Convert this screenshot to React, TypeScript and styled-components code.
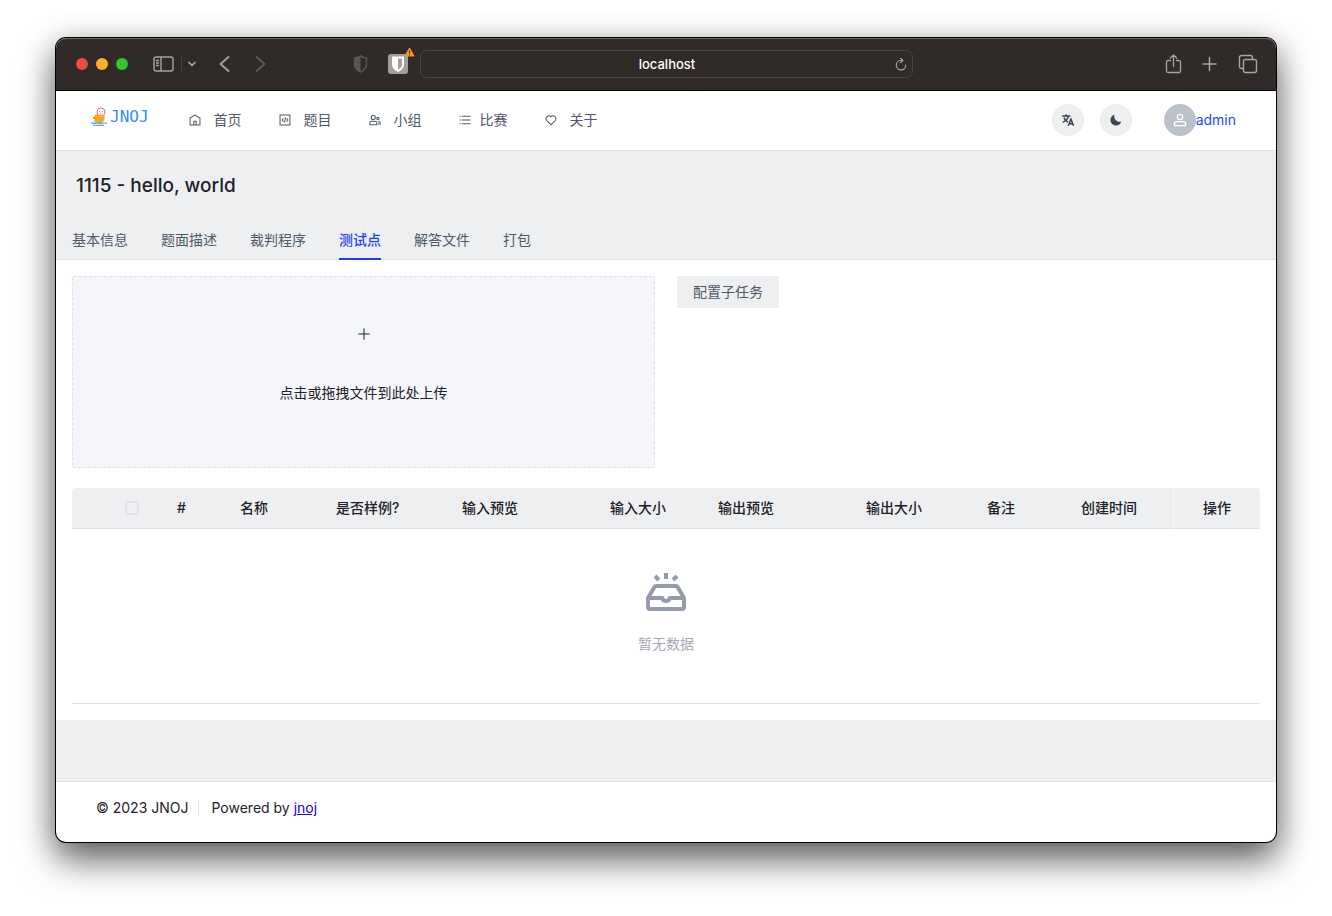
import React from "react";
import styled, { createGlobalStyle, css } from "styled-components";

const GlobalStyle = createGlobalStyle`
  *, *::before, *::after { box-sizing: border-box; }
  body {
    margin: 0;
    background: #fff;
    color: #1d2129;
    font-family: Inter, "Noto Sans CJK SC", sans-serif;
    font-size: 14px;
    line-height: 22px;
  }
  button { font: inherit; color: inherit; border: 0; background: none; padding: 0; cursor: pointer; }
  svg { display: block; flex: none; }
`;

const Desktop = styled.div`
  padding: 38px 56px 74px;
  overflow: hidden;
`;

const BrowserWindow = styled.div`
  border-radius: 10px;
  background: #fff;
  box-shadow: 0 0 0 1px #000, 0 18px 36px rgba(0, 0, 0, 0.55), 0 6px 32px rgba(0, 0, 0, 0.25);
`;

const TitleBar = styled.div`
  display: grid;
  grid-template-columns: 1fr minmax(0, 493px) 1fr;
  align-items: center;
  height: 53px;
  background: #302a28;
  border-bottom: 1px solid #000;
  border-radius: 10px 10px 0 0;
  box-shadow: inset 0 1px 0 #6b6766;
  color: #a8a4a2;
`;

const BarSide = styled.div<{ $end?: boolean }>`
  display: flex;
  align-items: center;
  padding: ${(p) => (p.$end ? "0 18px 0 0" : "0 12px 0 20px")};
  ${(p) => p.$end && css`justify-content: flex-end; gap: 20px;`}
`;

const Lights = styled.div`
  display: flex;
  gap: 8px;
  margin-right: 25px;
`;

const Light = styled.span<{ $color: string }>`
  width: 12px;
  height: 12px;
  border-radius: 50%;
  background: ${(p) => p.$color};
`;

const BarButton = styled.button<{ $dim?: boolean }>`
  display: block;
  color: ${(p) => (p.$dim ? "#5c5755" : "inherit")};
`;

const BarRule = styled.span`
  width: 1px;
  height: 18px;
  margin: 0 4px 0 7px;
  background: #45403e;
`;

const History = styled.div`
  display: flex;
  gap: 16px;
  margin-left: 16px;
`;

const Extensions = styled.div`
  display: flex;
  align-items: center;
  gap: 20px;
  margin-left: auto;
`;

const Extension = styled.button`
  position: relative;
  width: 20px;
  height: 20px;
  border-radius: 3px;
  background: #a19e9d;
`;

const Warning = styled.span`
  position: absolute;
  top: -7px;
  right: -7px;
`;

const AddressBar = styled.div`
  display: flex;
  align-items: center;
  height: 28px;
  padding: 0 4px 0 20px;
  border: 1px solid #4b4644;
  border-radius: 7px;
`;

const Address = styled.input`
  flex: 1;
  min-width: 0;
  padding: 0;
  border: 0;
  outline: 0;
  background: none;
  color: #fff;
  text-align: center;
  font: 500 13px/20px Inter, sans-serif;
`;

const SiteHeader = styled.header`
  display: flex;
  align-items: center;
  height: 60px;
  padding: 0 40px 2px 34px;
  border-bottom: 1px solid #dfe1e7;
`;

const Logo = styled.a`
  display: flex;
  align-items: center;
  gap: 2px;
  margin: 0 39px 6px 0;
  color: #2f8ff5;
  text-decoration: none;
  font: 16px/20px "DejaVu Sans Mono", monospace;
`;

const Nav = styled.nav`
  display: flex;
  gap: 36px;
`;

const NavLink = styled.a<{ $tight?: boolean }>`
  display: flex;
  align-items: center;
  gap: ${(p) => (p.$tight ? 8 : 12)}px;
  color: #4e5969;
  text-decoration: none;
`;

const Tools = styled.div`
  display: flex;
  align-items: center;
  gap: 16px;
  margin-left: auto;
`;

const RoundButton = styled.button`
  display: grid;
  place-items: center;
  width: 32px;
  height: 32px;
  border-radius: 50%;
  background: #eeeff1;
  color: #3c4656;
`;

const Account = styled.a`
  display: flex;
  align-items: center;
  margin-left: 16px;
  color: #1f47ff;
  text-decoration: none;
`;

const Avatar = styled.span`
  display: grid;
  place-items: center;
  width: 32px;
  height: 32px;
  border-radius: 50%;
  background: #bcc0cb;
  color: #fff;
`;

const ProblemHeader = styled.div`
  padding: 20px 16px 0;
  background: #eeeff1;
  border-bottom: 1px solid #dfe1e7;
`;

const Title = styled.h1`
  margin: 0 0 28px 4px;
  font-size: 19px;
  line-height: 30px;
  font-weight: 500;
`;

const Tabs = styled.div`
  display: flex;
  gap: 33px;
  margin-bottom: -1px;
`;

const Tab = styled.button<{ $active?: boolean }>`
  height: 31px;
  padding-bottom: 7px;
  border-bottom: 2px solid ${(p) => (p.$active ? "#1f3fff" : "transparent")};
  color: ${(p) => (p.$active ? "#1f3fff" : "#4e5969")};
  font-weight: ${(p) => (p.$active ? 500 : 400)};
`;

const Content = styled.main`
  padding: 16px;
`;

const Split = styled.div`
  display: grid;
  grid-template-columns: 1fr 1fr;
  gap: 22px;
  align-items: start;
  margin-bottom: 20px;
`;

const DropZone = styled.button`
  display: flex;
  flex-direction: column;
  align-items: center;
  gap: 40px;
  padding: 49px 0 63px;
  border: 1px dashed #dfe1e7;
  border-radius: 2px;
  background: #f4f6fb;
  color: #1d2129;
`;

const GrayButton = styled.button`
  justify-self: start;
  height: 32px;
  padding: 0 16px;
  background: #eeeff1;
  color: #4e5969;
`;

const DataTable = styled.table`
  width: 100%;
  table-layout: fixed;
  border-collapse: separate;
  border-spacing: 0;
`;

const HeadCell = styled.th<{ $center?: boolean; $divided?: boolean }>`
  height: 41px;
  padding: 0 ${(p) => (p.$center ? 0 : 16)}px;
  background: #eeeff1;
  border-bottom: 1px solid #dfe1e7;
  border-left: ${(p) => (p.$divided ? "1px solid #f8f8fa" : "0")};
  font-weight: 500;
  text-align: ${(p) => (p.$center ? "center" : "left")};
  white-space: nowrap;
  &:first-child { border-top-left-radius: 4px; }
  &:last-child { border-top-right-radius: 4px; }
`;

const Checkbox = styled.input`
  appearance: none;
  display: block;
  width: 14px;
  height: 14px;
  margin: 0 auto;
  border: 2px solid #dfe1e7;
  border-radius: 2px;
`;

const EmptyCell = styled.td`
  padding: 39px 0 48px;
  border-bottom: 1px solid #dfe1e7;
  color: #a3a9b4;
`;

const Empty = styled.div`
  display: flex;
  flex-direction: column;
  align-items: center;
  gap: 17px;
`;

const EmptyText = styled.span`
  line-height: 22px;
`;

const Band = styled.div`
  height: 61px;
  background: #eeeff1;
`;

const Footer = styled.footer`
  display: flex;
  align-items: center;
  padding: 15px 40px 23px;
  border-top: 1px solid #dfe1e7;
  line-height: 22px;
`;

const FooterRule = styled.span`
  width: 1px;
  height: 14px;
  margin: 0 12px 0 10px;
  background: #dfe1e7;
`;

const FooterLink = styled.a`
  color: #1a00e6;
  text-decoration: underline;
`;

type IconProps = { size: number; color?: string; children: React.ReactNode; weight?: number };

const Icon = ({ size, color = "currentColor", weight = 4, children }: IconProps) => (
  <svg width={size} height={size} viewBox="0 0 48 48" fill="none" stroke={color} strokeWidth={weight} aria-hidden="true">
    {children}
  </svg>
);

const navItems = [
  { label: "首页", art: <path d="M7 17 24 7l17 10v24H7V17ZM20 28h8v13h-8V28Z" /> },
  {
    label: "题目",
    art: <path d="M7 7h34v34H7V7ZM19 18l-5 6 5 6M29 18l5 6-5 6M26 16l-4 16" />,
  },
  {
    label: "小组",
    art: (
      <>
        <circle cx="18" cy="15" r="7" />
        <circle cx="34" cy="19" r="4" />
        <path d="M6 34a6 6 0 0 1 6-6h12a6 6 0 0 1 6 6v6H6v-6ZM34 30h4a4 4 0 0 1 4 4v4h-8" />
      </>
    ),
  },
  { label: "比赛", tight: true, art: <path d="M13 24h30M5 11h4m4 26h30M13 11h30M5 24h4M5 37h4" /> },
  {
    label: "关于",
    art: (
      <path d="M38.083 12.912a9.659 9.659 0 0 1 0 13.66L24 40.2 9.917 26.572a9.659 9.659 0 0 1 13.659-13.66l.424.425.425-.425a9.659 9.659 0 0 1 13.658 0Z" />
    ),
  },
];

const tabs = ["基本信息", "题面描述", "裁判程序", "测试点", "解答文件", "打包"];

const columns = [
  { label: "#", width: 63 },
  { label: "名称", width: 96 },
  { label: "是否样例?", width: 126 },
  { label: "输入预览", width: 148 },
  { label: "输入大小", width: 108 },
  { label: "输出预览", width: 148 },
  { label: "输出大小", width: 121 },
  { label: "备注", width: 94 },
  { label: "创建时间", width: 108 },
];

const Duck = () => (
  <svg width="18" height="20" viewBox="0 0 18 20" aria-hidden="true">
    <circle cx="11" cy="5" r="4" fill="#fff" stroke="#d8737a" />
    <path d="M9.500 4v1.400M12.300 4v1.400M9.500 6.800h3" stroke="#d8737a" strokeWidth=".8" />
    <path d="M6 7.500c2-.800 4 .200 4.500 2 1.500 0 3-.300 4-1 .800 3-.500 6.500-3.500 7.500H6.500c-2.500-.800-3-3.200-1.300-4.500C3.500 10.500 4 8.300 6 7.500Z" fill="#f9a81c" />
    <path d="M2.500 11 5 9.800v2.400Z" fill="#e8602c" />
    <path d="M1 16.200c2-1 3 1 5.500 0s3.500 1 5.500 0 3 .500 5-.200M3 18.300c2-.700 3 .500 5 0s3 .400 6-.200" fill="none" stroke="#4aa8f0" strokeWidth="1.200" />
  </svg>
);

const Shield = ({ width, height }: { width: number; height: number }) => (
  <svg width={width} height={height} viewBox="0 0 14 18" aria-hidden="true">
    <path
      d="M7 1c2 1.300 4 1.900 6 2v6c0 4-2.500 6.500-6 8-3.500-1.500-6-4-6-8V3c2-.100 4-.700 6-2Z"
      fill="none"
      stroke="#5b5654"
      strokeWidth="1.500"
    />
    <path d="M7 1v16c-3.500-1.500-6-4-6-8V3c2-.100 4-.700 6-2Z" fill="#5b5654" />
  </svg>
);

const Line = ({ w, h, d, weight = 1.4 }: { w: number; h: number; d: string; weight?: number }) => (
  <svg
    width={w}
    height={h}
    viewBox={`0 0 ${w} ${h}`}
    fill="none"
    stroke="currentColor"
    strokeWidth={weight}
    strokeLinecap="round"
    strokeLinejoin="round"
    aria-hidden="true"
  >
    <path d={d} />
  </svg>
);

export default function App() {
  return (
    <Desktop>
      <GlobalStyle />
      <BrowserWindow>
        <TitleBar>
          <BarSide>
            <Lights>
              <Light $color="#f04a47" />
              <Light $color="#f7b02a" />
              <Light $color="#37c332" />
            </Lights>
            <BarButton aria-label="Sidebar">
              <Line w={21} h={16} d="M3 1h15a2 2 0 0 1 2 2v10a2 2 0 0 1-2 2H3a2 2 0 0 1-2-2V3a2 2 0 0 1 2-2ZM8 1v14M3.500 4.500h2M3.500 7h2M3.500 9.500h2" weight={1.4} />
            </BarButton>
            <BarRule />
            <BarButton aria-label="Tab groups">
              <Line w={12} h={8} d="M3 2.500 6 5.500 9 2.500" weight={1.7} />
            </BarButton>
            <History>
              <BarButton aria-label="Back">
                <Line w={20} h={18} d="M14.500 2 6.500 9l8 7" weight={1.8} />
              </BarButton>
              <BarButton aria-label="Forward" $dim>
                <Line w={20} h={18} d="M6.500 2l8 7-8 7" weight={1.8} />
              </BarButton>
            </History>
            <Extensions>
              <Shield width={15} height={18} />
              <Extension aria-label="Password manager">
                <svg width="20" height="20" viewBox="0 0 20 20" aria-hidden="true">
                  <path d="M4 2.500h12v8c0 3.500-2.500 5.500-6 7.500-3.500-2-6-4-6-7.500v-8Z" fill="#fff" />
                  <path d="M10 4.500h4v6c0 2.300-1.500 3.800-4 5.200V4.500Z" fill="#a19e9d" />
                </svg>
                <Warning>
                  <svg width="11" height="10" viewBox="0 0 11 10" aria-hidden="true">
                    <path d="M5.500 1 10 9H1L5.500 1Z" fill="#f39a1d" stroke="#f39a1d" strokeLinejoin="round" />
                    <path d="M5.500 3.500v3M5.500 7.500v1" stroke="#4a3210" strokeWidth="1.100" />
                  </svg>
                </Warning>
              </Extension>
            </Extensions>
          </BarSide>
          <AddressBar>
            <Address aria-label="Address" defaultValue="localhost" />
            <BarButton aria-label="Reload">
              <Line w={14} h={14} d="M11.700 8.200a4.700 4.700 0 1 1-4.700-4.700h1.700M6.700 1.300l2.200 2.200-2.200 2.200" weight={1.2} />
            </BarButton>
          </AddressBar>
          <BarSide $end>
            <BarButton aria-label="Share">
              <Line w={17} h={20} d="M5.500 6.500H3A1.500 1.500 0 0 0 1.500 8v9A1.500 1.500 0 0 0 3 18.500h11a1.500 1.500 0 0 0 1.500-1.500V8A1.500 1.500 0 0 0 14 6.500h-2.500M8.500 12.500V1M5.300 4l3.200-3 3.200 3" weight={1.3} />
            </BarButton>
            <BarButton aria-label="New tab">
              <Line w={16} h={16} d="M7.500 1.500v13M1 8h13" weight={1.5} />
            </BarButton>
            <BarButton aria-label="Tab overview">
              <Line w={20} h={20} d="M7.500 5.500h9a2 2 0 0 1 2 2v9a2 2 0 0 1-2 2h-9a2 2 0 0 1-2-2v-9a2 2 0 0 1 2-2ZM5.500 14.500H3.500a2 2 0 0 1-2-2v-9a2 2 0 0 1 2-2h9a2 2 0 0 1 2 2v2" weight={1.4} />
            </BarButton>
          </BarSide>
        </TitleBar>

        <SiteHeader>
          <Logo href="#">
            <Duck />
            JNOJ
          </Logo>
          <Nav>
            {navItems.map((item) => (
              <NavLink key={item.label} href="#" $tight={item.tight}>
                <Icon size={14} weight={3.5}>
                  {item.art}
                </Icon>
                {item.label}
              </NavLink>
            ))}
          </Nav>
          <Tools>
            <RoundButton aria-label="Language">
              <svg width="14" height="14" viewBox="0 0 24 24" fill="none" stroke="currentColor" strokeWidth="2.600" aria-hidden="true">
                <path d="M2 5h14M9 2v3M13 5c-1 4.500-4.500 8.500-10 11M5 8c1.500 3.500 4 6 7 7.500M12.500 22l4.500-11.500L21.500 22M14 18.500h6.500" />
              </svg>
            </RoundButton>
            <RoundButton aria-label="Dark mode">
              <svg width="14" height="14" viewBox="0 0 48 48" fill="currentColor" aria-hidden="true">
                <path d="M42.108 29.769c.124-.387-.258-.736-.645-.613A17.990 17.990 0 0 1 36 30c-9.941 0-18-8.059-18-18 0-1.904.296-3.740.844-5.463.123-.387-.226-.768-.613-.645C10.558 8.334 5 15.518 5 24c0 10.493 8.507 19 19 19 8.482 0 15.666-5.558 18.108-13.231Z" />
              </svg>
            </RoundButton>
            <Account href="#">
              <Avatar>
                <Icon size={16}>
                  <circle cx="24" cy="15" r="8" />
                  <path d="M7 37c0-4.970 4.030-8 9-8h16c4.970 0 9 3.030 9 8v3a1 1 0 0 1-1 1H8a1 1 0 0 1-1-1v-3Z" />
                </Icon>
              </Avatar>
              admin
            </Account>
          </Tools>
        </SiteHeader>

        <ProblemHeader>
          <Title>1115 - hello, world</Title>
          <Tabs role="tablist">
            {tabs.map((name) => (
              <Tab key={name} role="tab" aria-selected={name === "测试点"} $active={name === "测试点"}>
                {name}
              </Tab>
            ))}
          </Tabs>
        </ProblemHeader>

        <Content>
          <Split>
            <DropZone>
              <Icon size={16} weight={3}>
                <path d="M7 24h34M24 7v34" />
              </Icon>
              点击或拖拽文件到此处上传
            </DropZone>
            <GrayButton>配置子任务</GrayButton>
          </Split>
          <DataTable>
            <colgroup>
              <col width={31} />
              <col width={58} />
              {columns.map((c) => (
                <col key={c.label} width={c.width} />
              ))}
              <col width={87} />
            </colgroup>
            <thead>
              <tr>
                <HeadCell $center />
                <HeadCell $center>
                  <Checkbox type="checkbox" aria-label="全选" />
                </HeadCell>
                {columns.map((c) => (
                  <HeadCell key={c.label}>{c.label}</HeadCell>
                ))}
                <HeadCell $center $divided>
                  操作
                </HeadCell>
              </tr>
            </thead>
            <tbody>
              <tr>
                <EmptyCell colSpan={columns.length + 3}>
                  <Empty>
                    <Icon size={48} color="#949baa">
                      <path d="M24 5v6m7 1 4-4m-18 4-4-4m28.500 22H28s-1 3-4 3-4-3-4-3H6.500M40 41H8a2 2 0 0 1-2-2v-8.460a2 2 0 0 1 .272-1.007l6.150-10.540A2 2 0 0 1 14.148 18H33.850a2 2 0 0 1 1.728.992l6.149 10.541A2 2 0 0 1 42 30.541V39a2 2 0 0 1-2 2Z" />
                    </Icon>
                    <EmptyText>暂无数据</EmptyText>
                  </Empty>
                </EmptyCell>
              </tr>
            </tbody>
          </DataTable>
        </Content>

        <Band />
        <Footer>
          <span>© 2023 JNOJ</span>
          <FooterRule />
          <span>
            Powered by <FooterLink href="#">jnoj</FooterLink>
          </span>
        </Footer>
      </BrowserWindow>
    </Desktop>
  );
}
